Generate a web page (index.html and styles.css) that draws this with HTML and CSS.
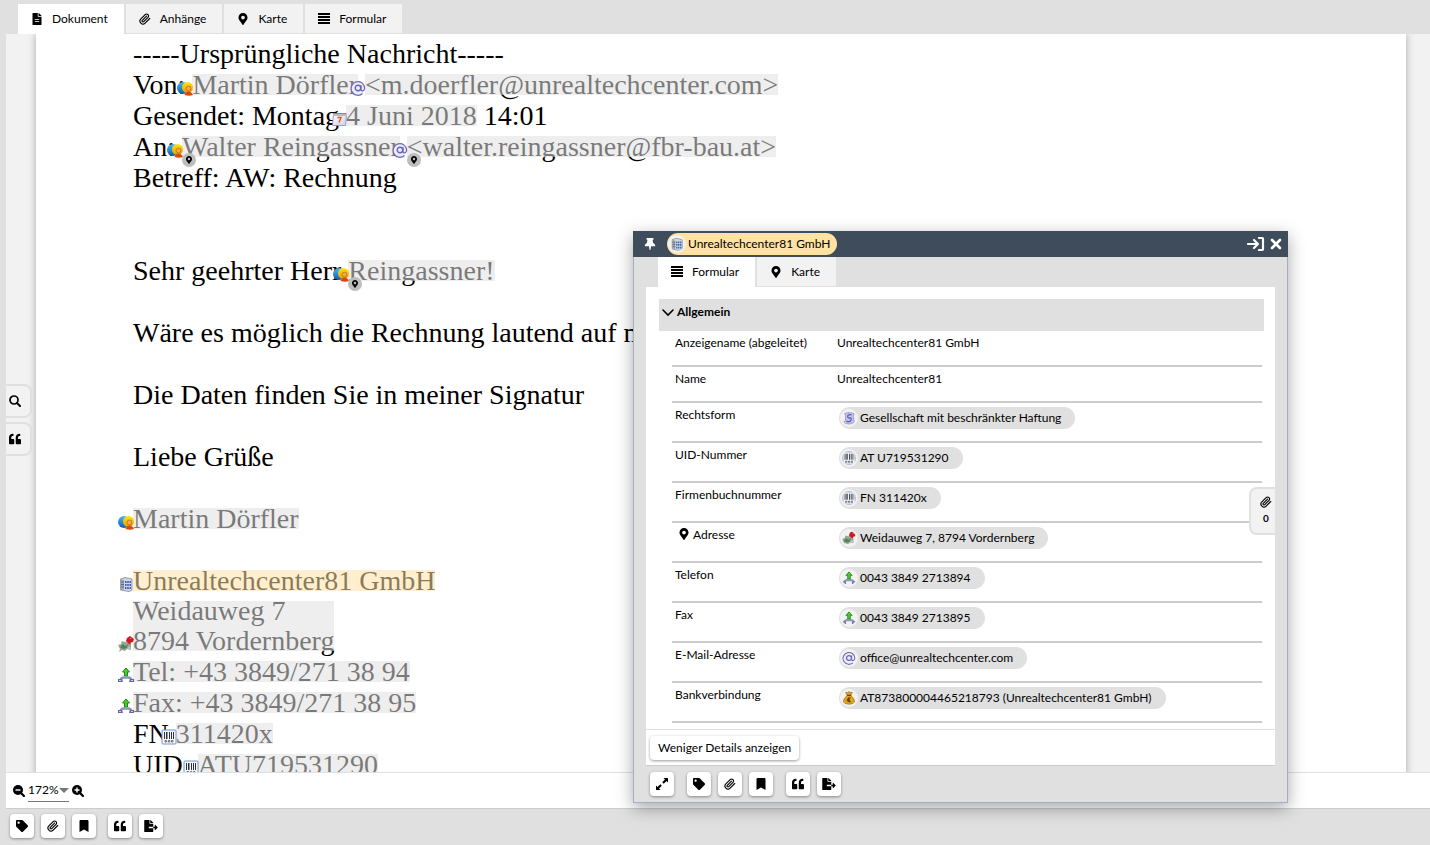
FILE: index.html
```html
<!DOCTYPE html>
<html lang="de">
<head>
    <meta charset="UTF-8">
    <meta name="viewport" content="width=device-width, initial-scale=1.0">
    <title>Dokument</title>
    <link rel="stylesheet" href="styles.css">
</head>
<body>

<!-- Icons -->
<svg class="sprite" aria-hidden="true">
    <defs>
        <linearGradient id="blueBall" x1="0" y1="0" x2="0" y2="1">
            <stop offset="0" stop-color="#4db4f2"/><stop offset="1" stop-color="#0a5fae"/>
        </linearGradient>
        <linearGradient id="goldBall" x1="0" y1="0" x2="0" y2="1">
            <stop offset="0" stop-color="#ffe414"/><stop offset="1" stop-color="#e79a05"/>
        </linearGradient>
        <linearGradient id="sheet" x1="0" y1="0" x2="1" y2="1">
            <stop offset="0" stop-color="#ffffff"/><stop offset="1" stop-color="#cfcfee"/>
        </linearGradient>
    </defs>
    <symbol id="file" viewBox="0 0 384 512"><path d="M224 136V0H24C11 0 0 11 0 24v464c0 13 11 24 24 24h336c13 0 24-11 24-24V160H248c-13 0-24-11-24-24zm64 236c0 7-5 12-12 12H108c-7 0-12-5-12-12v-8c0-7 5-12 12-12h168c7 0 12 5 12 12v8zm0-84c0 7-5 12-12 12H108c-7 0-12-5-12-12v-8c0-7 5-12 12-12h168c7 0 12 5 12 12v8zM384 122v6H256V0h6c6 0 13 2 17 7l98 98c4 4 7 11 7 17z"/></symbol>
    <symbol id="clip" viewBox="0 0 24 24"><path fill="none" stroke="currentColor" stroke-width="2.3" stroke-linecap="round" d="m21.440 11.050-9.190 9.190a6 6 0 0 1-8.490-8.490l8.570-8.570A4 4 0 1 1 18 8.840l-8.590 8.570a2 2 0 0 1-2.830-2.830l8.490-8.480"/></symbol>
    <symbol id="marker" viewBox="0 0 384 512"><path d="M172 502C27 291 0 269 0 192 0 86 86 0 192 0s192 86 192 192c0 77-27 99-172 310-10 13-30 13-40 0zM192 272c44 0 80-36 80-80s-36-80-80-80-80 36-80 80 36 80 80 80z"/></symbol>
    <symbol id="lines" viewBox="0 0 12 12"><path d="M0 0h12v2H0zM0 3h12v2H0zM0 6h12v2H0zM0 9h12v2H0z"/></symbol>
    <symbol id="quote" viewBox="0 0 512 512"><path d="M464 256h-80v-64c0-35 29-64 64-64h8c13 0 24-11 24-24V56c0-13-11-24-24-24h-8c-88 0-160 72-160 160v240c0 27 21 48 48 48h128c27 0 48-21 48-48V304c0-27-21-48-48-48zm-288 0H96v-64c0-35 29-64 64-64h8c13 0 24-11 24-24V56c0-13-11-24-24-24h-8C72 32 0 104 0 192v240c0 27 21 48 48 48h128c27 0 48-21 48-48V304c0-27-21-48-48-48z"/></symbol>
    <symbol id="tag" viewBox="0 0 512 512"><path d="M0 252V48C0 21 21 0 48 0h204a48 48 0 0 1 34 14l212 212c19 19 19 49 0 68L294 498c-19 19-49 19-68 0L14 286A48 48 0 0 1 0 252zM112 64c-27 0-48 21-48 48s21 48 48 48 48-21 48-48-21-48-48-48z"/></symbol>
    <symbol id="bookmark" viewBox="0 0 384 512"><path d="M0 512V48C0 21 21 0 48 0h288c27 0 48 21 48 48v464L192 400 0 512z"/></symbol>
    <symbol id="export" viewBox="0 0 576 512"><path d="M384 122c0-6-3-12-7-17L279 7c-5-5-11-7-17-7h-6v128h128zM571 308l-96-96c-10-11-27-4-27 11v65h-64v64h64v65c0 14 17 22 27 11l96-96c7-7 7-17 0-24zm-379 28v-32c0-9 7-16 16-16h176V160H248c-13 0-24-11-24-24V0H24C11 0 0 11 0 24v464c0 13 11 24 24 24h336c13 0 24-11 24-24V352H208c-9 0-16-7-16-16z"/></symbol>
    <symbol id="search" viewBox="0 0 12 12"><g fill="none" stroke="currentColor" stroke-linecap="round"><circle cx="5" cy="5" r="4" stroke-width="1.7"/><path stroke-width="2" d="m8 8 3 3"/></g></symbol>
    <symbol id="zoom-out" viewBox="0 0 12 12"><circle cx="5" cy="5" r="5"/><path stroke="currentColor" stroke-width="2.2" stroke-linecap="round" d="m8 8 3 3"/><path stroke="#fff" stroke-width="1.4" d="M2.500 5h5"/></symbol>
    <symbol id="zoom-in" viewBox="0 0 12 12"><circle cx="5" cy="5" r="5"/><path stroke="currentColor" stroke-width="2.2" stroke-linecap="round" d="m8 8 3 3"/><path stroke="#fff" stroke-width="1.4" d="M2.500 5h5M5 2.500v5"/></symbol>
    <symbol id="pin" viewBox="0 0 12 14"><path d="M2 0h8v2H9l.5 3.500L12 8v1.500H7.200L6.500 14h-1L4.800 9.500H0V8l2.500-2.500L3 2H2z"/></symbol>
    <symbol id="dock" viewBox="0 0 18 14"><path fill="none" stroke="currentColor" stroke-width="2.2" stroke-linecap="round" stroke-linejoin="round" d="M1 7h10M7 3l4 4-4 4M12 1h3q1 0 1 1v10q0 1-1 1h-3"/></symbol>
    <symbol id="close" viewBox="0 0 12 12"><path stroke="currentColor" stroke-width="2.6" stroke-linecap="round" d="m2 2 8 8M10 2l-8 8"/></symbol>
    <symbol id="expand" viewBox="0 0 12 12"><path d="M7.500 0H12v4.500l-1.500-1.500-2.800 2.800-1.500-1.500L9 1.500zM4.500 12H0V7.500L1.500 9l2.800-2.800 1.500 1.500L3 10.500z"/></symbol>
    <symbol id="chevron" viewBox="0 0 12 12"><path fill="none" stroke="currentColor" stroke-width="1.6" stroke-linecap="round" d="m1 4 5 5 5-5"/></symbol>
    <!-- Entity icons -->
    <symbol id="person" viewBox="0 0 16 16"><circle cx="6" cy="8" r="6" fill="url(#blueBall)"/><circle cx="10.500" cy="7.500" r="5.500" fill="url(#goldBall)"/><path fill="#d9480f" d="M7.500 15q1-3.500 4-3.500t4.500 3.500q-4 1.500-8.500 0z"/><circle cx="11.500" cy="8.500" r="2.400" fill="#f2ac4c" stroke="#b9650f" stroke-width=".7"/></symbol>
    <symbol id="mail" viewBox="0 0 16 16"><circle cx="8" cy="8" r="7" fill="#ecebfa"/><g fill="none" stroke="#6967b5"><path stroke-width="1.2" d="M12.500 13.500A6.800 6.800 0 1 1 14.700 8c0 3.500-3.700 4-3.700 1V5"/><circle cx="8" cy="8" r="2.800" stroke-width="1.400"/></g></symbol>
    <symbol id="calendar" viewBox="0 0 16 16"><path fill="url(#sheet)" stroke="#8a8aae" stroke-width=".8" d="M2.500 3h13l-1 11.500H1.500z"/><path fill="#b9b9c8" d="M2 2h14v3H2z"/><path stroke="#55556a" stroke-dasharray="1 1" d="M2.500 2.500H15"/><path fill="none" stroke="#e8560f" stroke-width="1.400" d="M6.500 6.500h3.500L8 11.500"/></symbol>
    <symbol id="building" viewBox="0 0 16 16"><path fill="#d4d8de" stroke="#7c8490" stroke-width=".8" d="M2.500 3 7 1.500l7 1.500v11l-3 1.500L2.500 14z"/><path fill="#a2a9b4" d="M2.500 3 6 4v11l-3.500-1z"/><path fill="#2d62c8" d="M7 5h1.500v2H7zm2.200 0h1.600v2H9.200zm2.300 0H13v2h-1.500zM7 8h1.500v2H7zm2.200 0h1.600v2H9.200zm2.300 0H13v2h-1.500zM7 11h1.500v2H7zm2.200 0h1.600v2H9.200zm2.300 0H13v2h-1.500z"/><path stroke="#5f6978" d="M3 6h3M3 8.500h3M3 11h3"/></symbol>
    <symbol id="address" viewBox="0 0 16 16"><path fill="#93aa92" d="M0 9l3-1 1-3 3 1 3-1 3 3v6l-4-1-2 2-3-1-3 2 1-3z"/><path fill="#577d5a" d="M2 11l3-3 2 2 3-2-1 4-4 1z"/><path fill="#b7c6bb" d="M9 12l3-2 1 3-2 1z"/><path stroke="#888" d="m11 7-3 4"/><path fill="#d3161c" d="m9 2 3-2 4 3-1 3-2 .5-1 2L8 5z"/><path fill="#f9655e" d="M11 2h2l1 1h-2z"/></symbol>
    <symbol id="phone" viewBox="0 0 16 16"><path fill="#58c820" stroke="#12901d" d="M8 1l3.500 4h-2v4h-3V5h-2z"/><path fill="none" stroke="#8d94bf" stroke-width="2.600" d="M2.500 14q0-3.500 3.500-3.500h4q3.500 0 3.500 3.500"/><path fill="#626b98" d="M0 12h4l1 3H0zM12 12h4v3h-5z"/><path fill="#c9cee8" d="M1 13h2v1H1zM13 13h2v1h-2z"/></symbol>
    <symbol id="barcode" viewBox="0 0 16 16"><rect x="1" y="1" width="14" height="14" rx="1" fill="#f4f7fd" stroke="#7493cc"/><path fill="#333" d="M3 3h1v7H3zM5 3h1.500v7H5zM8 3h1v7H8zM10 3h1v7h-1zM12 3h1v7h-1z"/><path fill="none" stroke="#555" stroke-width=".8" d="M4 11.500h1.500V13H4zM7.300 11.500h1.500V13H7.300zM10.500 11.500H12V13h-1.500z"/></symbol>
    <symbol id="law" viewBox="0 0 16 16"><path fill="#c5c6ef" stroke="#8587c9" stroke-width=".8" d="M3 3q4-2 7-1l4 1-1 3 1 7q-4 3-10 1.500L2 12l2-1V5z"/><path fill="none" stroke="#5759ae" stroke-width="1.400" d="M11 4.500q-4.500-1-4.500 1.500t2.500 2T10 11q-1 2-5 .5"/></symbol>
    <symbol id="money" viewBox="0 0 16 16"><path fill="#dea522" stroke="#95670c" stroke-width=".7" d="M6 5 4 1l2 1 2-1.500L10 2l2-1-2 4q5 4 4.500 8-.5 2-6.500 2t-6.500-2Q1 9 6 5z"/><path stroke="#a5280e" stroke-width="1.400" d="M5.500 5h5"/><path fill="none" stroke="#5f3f04" stroke-width="1.200" d="M10 8q-3-1-3 2t3 2M5.500 9.500h3.500M5.500 11H9"/></symbol>
</svg>

<nav class="tabs">
    <button class="tab active" type="button"><svg class="icon"><use href="#file"/></svg>Dokument</button>
    <button class="tab" type="button"><svg class="icon"><use href="#clip"/></svg>Anhänge</button>
    <button class="tab" type="button"><svg class="icon"><use href="#marker"/></svg>Karte</button>
    <button class="tab" type="button"><svg class="icon"><use href="#lines"/></svg>Formular</button>
</nav>

<main class="viewer">
    <div class="scroll">
        <article class="page">
            <p>-----Ursprüngliche Nachricht-----</p>
            <p>Von: <span class="entity">Martin Dörfler<svg class="mark"><use href="#person"/></svg></span> <span class="entity">&lt;m.doerfler@unrealtechcenter.com&gt;<svg class="mark"><use href="#mail"/></svg></span></p>
            <p>Gesendet: Montag <span class="entity">4 Juni 2018<svg class="mark"><use href="#calendar"/></svg></span> 14:01</p>
            <p>An: <span class="entity">Walter Reingassner<svg class="mark"><use href="#person"/></svg><span class="place"><svg><use href="#marker"/></svg></span></span> <span class="entity">&lt;walter.reingassner@fbr-bau.at&gt;<svg class="mark"><use href="#mail"/></svg><span class="place"><svg><use href="#marker"/></svg></span></span></p>
            <p>Betreff: AW: Rechnung</p>
            <br>
            <br>
            <p>Sehr geehrter Herr <span class="entity">Reingassner!<svg class="mark"><use href="#person"/></svg><span class="place"><svg><use href="#marker"/></svg></span></span></p>
            <br>
            <p>Wäre es möglich die Rechnung lautend auf m</p>
            <br>
            <p>Die Daten finden Sie in meiner Signatur</p>
            <br>
            <p>Liebe Grüße</p>
            <br>
            <p><span class="entity">Martin Dörfler<svg class="mark"><use href="#person"/></svg></span></p>
            <br>
            <p><span class="entity selected">Unrealtechcenter81 GmbH<svg class="mark"><use href="#building"/></svg></span></p>
            <p><span class="entity block">Weidauweg 7<br>8794 Vordernberg<svg class="mark"><use href="#address"/></svg></span></p>
            <p><span class="entity">Tel: +43 3849/271 38 94<svg class="mark"><use href="#phone"/></svg></span></p>
            <p><span class="entity">Fax: +43 3849/271 38 95<svg class="mark"><use href="#phone"/></svg></span></p>
            <p>FN <span class="entity">311420x<svg class="mark"><use href="#barcode"/></svg></span></p>
            <p>UID: <span class="entity">ATU719531290<svg class="mark"><use href="#barcode"/></svg></span></p>
        </article>
    </div>
    <div class="side-buttons">
        <button type="button" aria-label="Suchen"><svg class="icon"><use href="#search"/></svg></button>
        <button type="button" aria-label="Zitate"><svg class="icon"><use href="#quote"/></svg></button>
    </div>
</main>

<div class="zoom-bar">
    <button type="button" aria-label="Verkleinern"><svg class="icon"><use href="#zoom-out"/></svg></button>
    <span class="zoom"><select aria-label="Zoom"><option>172%</option></select></span>
    <button type="button" aria-label="Vergrößern"><svg class="icon"><use href="#zoom-in"/></svg></button>
</div>

<footer class="toolbar">
    <div class="group">
        <button type="button" aria-label="Tag"><svg class="icon"><use href="#tag"/></svg></button>
        <button type="button" aria-label="Anhang"><svg class="icon"><use href="#clip"/></svg></button>
        <button type="button" aria-label="Lesezeichen"><svg class="icon"><use href="#bookmark"/></svg></button>
    </div>
    <div class="group">
        <button type="button" aria-label="Zitat"><svg class="icon"><use href="#quote"/></svg></button>
        <button type="button" aria-label="Exportieren"><svg class="icon wide"><use href="#export"/></svg></button>
    </div>
</footer>

<!-- Details -->
<section class="dialog" role="dialog" aria-label="Unrealtechcenter81 GmbH">
    <header class="dialog-header">
        <button type="button" aria-label="Anheften"><svg class="icon"><use href="#pin"/></svg></button>
        <span class="chip title"><svg><use href="#building"/></svg>Unrealtechcenter81 GmbH</span>
        <button class="push" type="button" aria-label="Andocken"><svg class="icon dock"><use href="#dock"/></svg></button>
        <button type="button" aria-label="Schließen"><svg class="icon"><use href="#close"/></svg></button>
    </header>
    <nav class="tabs">
        <button class="tab active" type="button"><svg class="icon"><use href="#lines"/></svg>Formular</button>
        <button class="tab" type="button"><svg class="icon"><use href="#marker"/></svg>Karte</button>
    </nav>
    <div class="dialog-body">
        <div class="details">
            <h2><svg class="icon"><use href="#chevron"/></svg>Allgemein</h2>
            <table>
                <tr class="plain"><th scope="row">Anzeigename (abgeleitet)</th><td>Unrealtechcenter81 GmbH</td></tr>
                <tr class="plain"><th scope="row">Name</th><td>Unrealtechcenter81</td></tr>
                <tr><th scope="row">Rechtsform</th><td><span class="chip"><svg><use href="#law"/></svg>Gesellschaft mit beschränkter Haftung</span></td></tr>
                <tr><th scope="row">UID-Nummer</th><td><span class="chip"><svg><use href="#barcode"/></svg>AT U719531290</span></td></tr>
                <tr><th scope="row">Firmenbuchnummer</th><td><span class="chip"><svg><use href="#barcode"/></svg>FN 311420x</span></td></tr>
                <tr><th scope="row"><svg class="icon"><use href="#marker"/></svg>Adresse</th><td><span class="chip"><svg><use href="#address"/></svg>Weidauweg 7, 8794 Vordernberg</span></td></tr>
                <tr><th scope="row">Telefon</th><td><span class="chip"><svg><use href="#phone"/></svg>0043 3849 2713894</span></td></tr>
                <tr><th scope="row">Fax</th><td><span class="chip"><svg><use href="#phone"/></svg>0043 3849 2713895</span></td></tr>
                <tr><th scope="row">E-Mail-Adresse</th><td><span class="chip"><svg><use href="#mail"/></svg>office@unrealtechcenter.com</span></td></tr>
                <tr><th scope="row">Bankverbindung</th><td><span class="chip"><svg><use href="#money"/></svg>AT873800004465218793 (Unrealtechcenter81 GmbH)</span></td></tr>
            </table>
        </div>
        <div class="more">
            <button type="button">Weniger Details anzeigen</button>
        </div>
        <button class="attachments" type="button" aria-label="Anhänge"><svg class="icon"><use href="#clip"/></svg>0</button>
    </div>
    <footer class="toolbar">
        <div class="group">
            <button type="button" aria-label="Maximieren"><svg class="icon"><use href="#expand"/></svg></button>
        </div>
        <div class="group">
            <button type="button" aria-label="Tag"><svg class="icon"><use href="#tag"/></svg></button>
            <button type="button" aria-label="Anhang"><svg class="icon"><use href="#clip"/></svg></button>
            <button type="button" aria-label="Lesezeichen"><svg class="icon"><use href="#bookmark"/></svg></button>
        </div>
        <div class="group">
            <button type="button" aria-label="Zitat"><svg class="icon"><use href="#quote"/></svg></button>
            <button type="button" aria-label="Exportieren"><svg class="icon wide"><use href="#export"/></svg></button>
        </div>
    </footer>
</section>

</body>
</html>
```
FILE: styles.css
```css
* {
    box-sizing: border-box;
}

body {
    margin: 0;
    height: 100vh;
    display: flex;
    flex-direction: column;
    overflow: hidden;
    background-color: #e0e0e0;
    color: #000;
    font-family: Lato, sans-serif;
    font-size: 12px;
    line-height: 16px;
}

button,
select {
    margin: 0;
    padding: 0;
    border: none;
    background: none;
    color: inherit;
    font: inherit;
    cursor: pointer;
}

.sprite {
    position: absolute;
    width: 0;
    height: 0;
}

.icon {
    display: block;
    flex: none;
    width: 12px;
    height: 12px;
    fill: currentColor;
}

.icon.wide {
    width: 14px;
}

/* Tabs */
.tabs {
    display: flex;
    align-items: flex-start;
    gap: 2px;
    height: 34px;
    padding: 4px 0 0 18px;
}

.tab {
    display: flex;
    align-items: center;
    gap: 9px;
    height: 29px;
    padding: 0 16px 0 13px;
    background-color: #f2f2f2;
}

.tab.active {
    height: 30px;
    background-color: #fff;
}

/* Document */
.viewer {
    position: relative;
    flex: 1;
    min-height: 0;
    margin-left: 6px;
    background-color: #f2f2f2;
}

.scroll {
    height: 100%;
    overflow: hidden;
    padding: 0 24px 0 30px;
}

.page {
    min-height: 100%;
    padding: 4px 97px;
    background-color: #fff;
    box-shadow: 0 0 8px rgba(0, 0, 0, 0.3);
    font-family: "Liberation Serif", serif;
    font-size: 28px;
    line-height: 31px;
    white-space: nowrap;
}

.page p {
    margin: 0;
}

.entity {
    position: relative;
    display: inline-block;
}

.entity::after {
    content: "";
    position: absolute;
    top: 5px;
    bottom: 5px;
    left: 0;
    right: 0;
    background-color: rgba(224, 224, 224, 0.54);
}

.entity.selected::after {
    background-color: rgba(255, 226, 164, 0.54);
}

.entity.block {
    line-height: 30px;
    vertical-align: top;
}

.mark {
    position: absolute;
    z-index: 1;
    left: -15px;
    bottom: 4px;
    width: 16px;
    height: 16px;
}

.place {
    position: absolute;
    z-index: 1;
    left: 0;
    top: 22px;
    display: flex;
    align-items: center;
    justify-content: center;
    width: 14px;
    height: 14px;
    border-radius: 50%;
    background-color: #bdbdbd;
}

.place svg {
    width: 6px;
    height: 8px;
}

.side-buttons {
    position: absolute;
    left: 0;
    top: 350px;
    display: flex;
    flex-direction: column;
    gap: 4px;
}

.side-buttons button {
    width: 26px;
    height: 34px;
    padding-left: 3px;
    border: 2px solid #e0e0e0;
    border-left: none;
    border-radius: 0 8px 8px 0;
    background-color: #f2f2f2;
}

.zoom-bar {
    display: flex;
    align-items: center;
    gap: 3px;
    height: 37px;
    margin-left: 6px;
    padding-left: 7px;
    border-top: 1px solid #e0e0e0;
    border-bottom: 1px solid #ccc;
    background-color: #fff;
}

.zoom {
    position: relative;
    width: 41px;
    border-bottom: 1px solid #777;
}

.zoom select {
    display: block;
    width: 100%;
    height: 22px;
    appearance: none;
}

.zoom::after {
    content: "";
    position: absolute;
    right: 0;
    top: 9px;
    border: 5px solid transparent;
    border-top-color: #777;
    border-bottom: none;
    pointer-events: none;
}

/* Toolbar */
.toolbar {
    display: flex;
    gap: 12px;
    height: 36px;
    padding: 5px 10px;
}

.group {
    display: flex;
    gap: 7px;
}

.toolbar button {
    display: flex;
    align-items: center;
    justify-content: center;
    width: 24px;
    height: 24px;
}

.toolbar button,
.more button {
    border-radius: 4px;
    background-color: #fff;
    box-shadow: 0 1px 3px rgba(0, 0, 0, 0.4);
}

/* Dialog */
.dialog {
    position: absolute;
    left: 633px;
    top: 231px;
    width: 655px;
    border: 1px solid #a3adc4;
    border-top: none;
    background-color: #e0e0e0;
    box-shadow: 0 5px 16px rgba(0, 0, 0, 0.35);
}

.dialog-header {
    display: flex;
    align-items: center;
    gap: 5px;
    height: 26px;
    margin: 0 -1px;
    padding: 0 6px 0 11px;
    background-color: #3f4c5b;
    color: #fff;
}

.dialog-header .icon.dock {
    width: 18px;
    height: 14px;
}

.push {
    margin-left: auto;
}

.chip {
    display: inline-flex;
    align-items: center;
    gap: 2px;
    height: 22px;
    padding: 0 14px 0 1px;
    border-radius: 11px;
    background-color: #e0e0e0;
}

.chip svg {
    width: 18px;
    height: 18px;
    padding: 2px;
    border-radius: 50%;
    background-color: #f2f2f2;
}

.chip.title {
    margin-left: 6px;
    padding-right: 7px;
    background-color: #ffe2a4;
    color: #000;
}

.dialog .tabs {
    height: 30px;
    padding: 0 0 0 24px;
}

.dialog-body {
    position: relative;
    margin: 0 12px;
    border-bottom: 1px solid #ccc;
    background-color: #fff;
}

.details {
    padding: 12px 11px 6px 13px;
    border-bottom: 1px solid #e0e0e0;
}

h2 {
    display: flex;
    gap: 3px;
    height: 32px;
    margin: 0;
    padding: 5px 3px;
    background-color: #e0e0e0;
    font-size: 12px;
    line-height: 16px;
}

h2 .icon {
    margin-top: 2px;
}

table {
    width: calc(100% - 15px);
    margin-left: 13px;
    border-spacing: 0;
    table-layout: fixed;
}

tr {
    height: 40px;
}

tr.plain {
    height: 36px;
}

th,
td {
    padding: 4px 3px;
    border-bottom: 2px solid #ccc;
    text-align: left;
    vertical-align: top;
    font-weight: normal;
}

th {
    width: 162px;
}

th .icon {
    display: inline-block;
    margin: 0 3px;
    vertical-align: -1px;
}

td .chip {
    margin-left: 2px;
    vertical-align: top;
}

.more {
    display: flex;
    padding: 6px 4px 5px;
}

.more button {
    height: 24px;
    padding: 0 8px;
}

.attachments {
    position: absolute;
    right: 0;
    top: 200px;
    display: flex;
    flex-direction: column;
    align-items: center;
    justify-content: center;
    gap: 2px;
    width: 26px;
    height: 48px;
    padding-left: 6px;
    border: 2px solid #e0e0e0;
    border-right: none;
    border-radius: 8px 0 0 8px;
    background-color: #f2f2f2;
    font-size: 10px;
    font-weight: bold;
    line-height: 16px;
}

.dialog .toolbar {
    gap: 13px;
    padding: 6px 16px;
}
```
